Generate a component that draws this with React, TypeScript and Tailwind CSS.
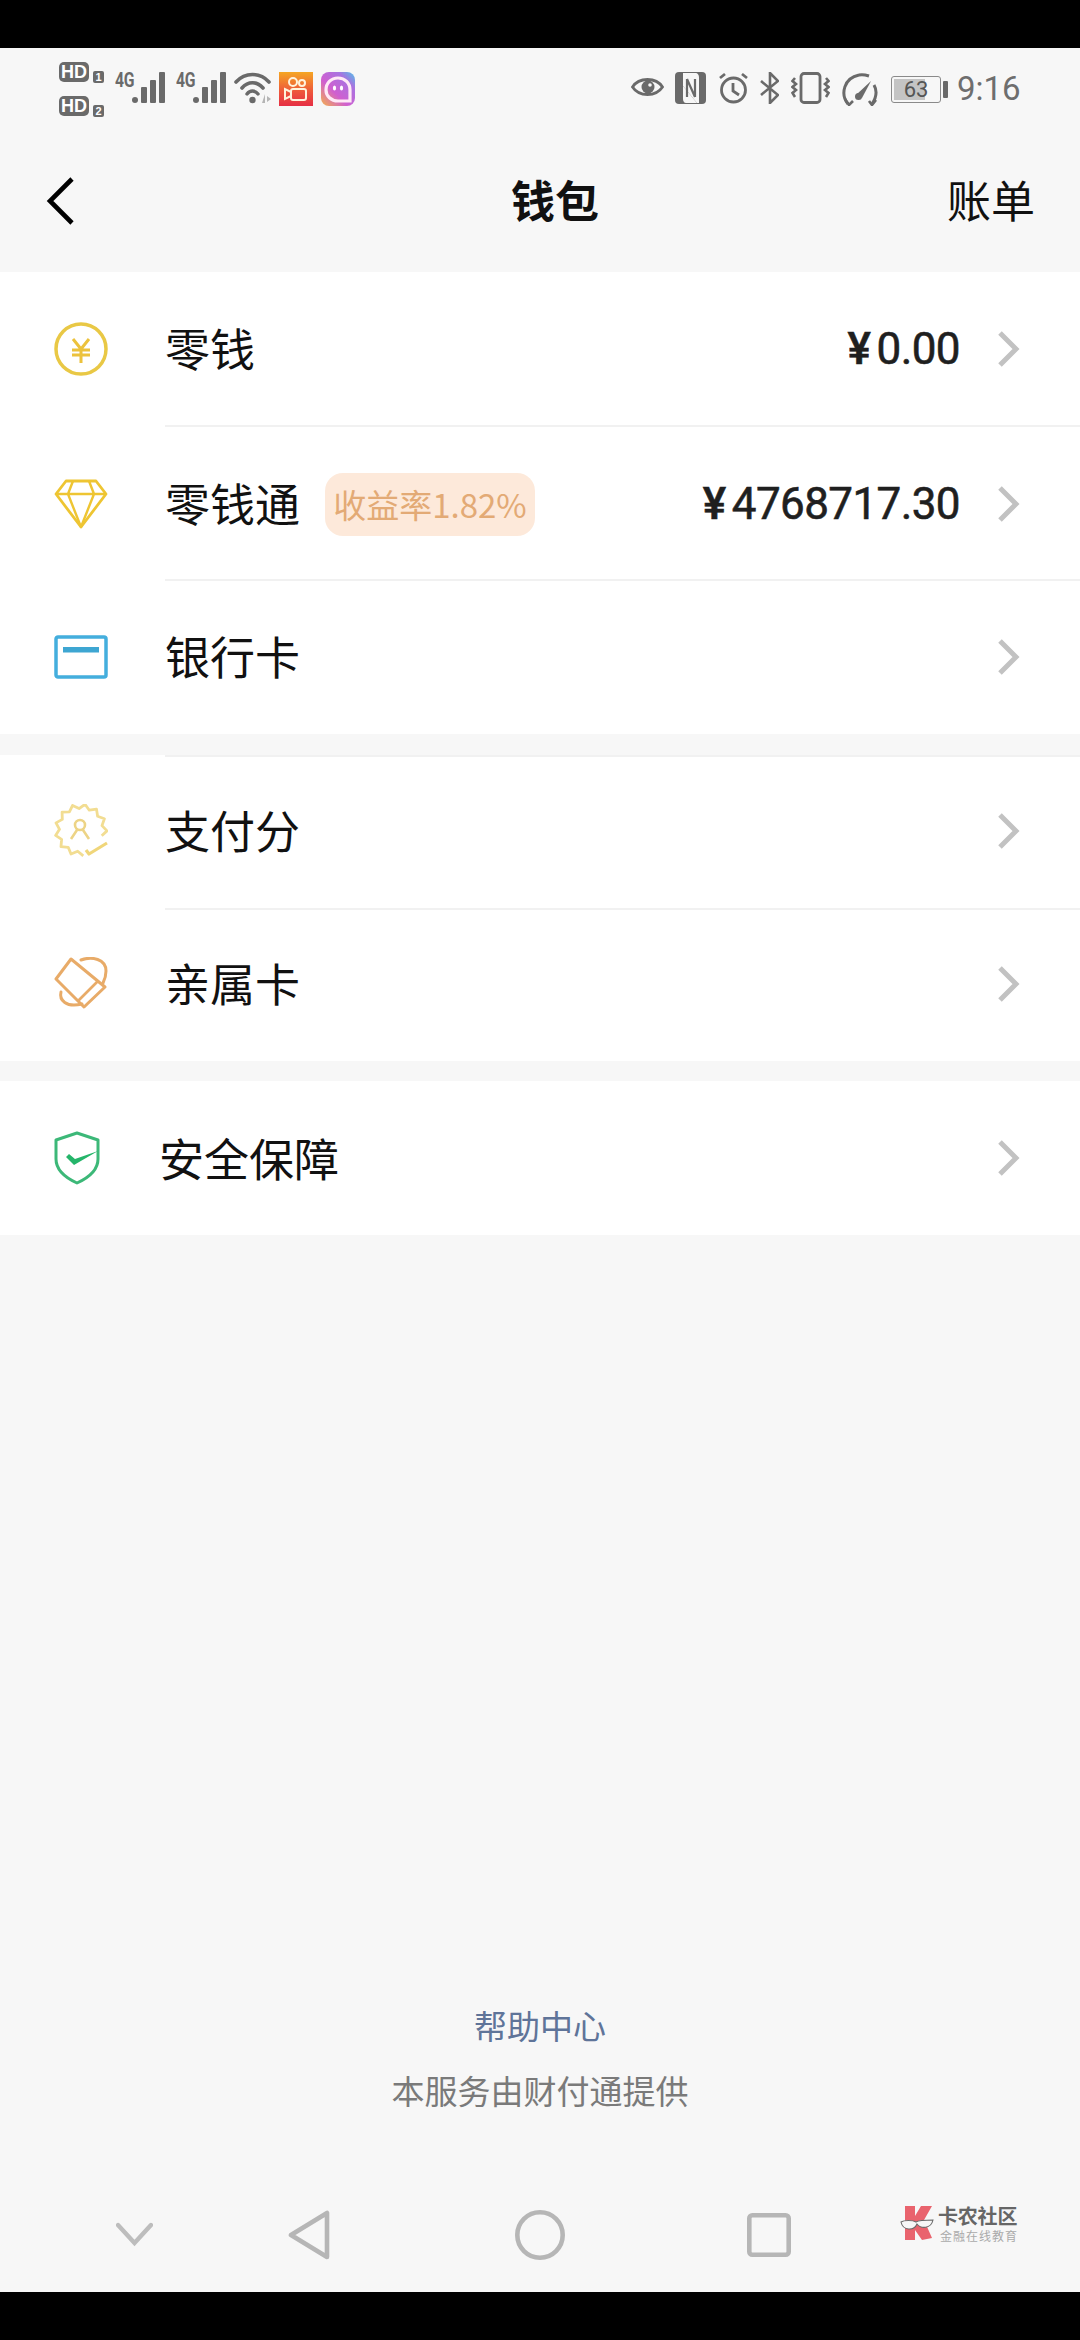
import React from "react";

const CJK = "font-['Noto_Sans_CJK_SC','Noto_Sans',sans-serif]";

function Chevron() {
  return (
    <svg width="24" height="38" viewBox="0 0 24 38" fill="none" className="shrink-0">
      <path d="M4 3 L20 19 L4 35" stroke="#c2c2c2" strokeWidth="5" />
    </svg>
  );
}

function CoinIcon() {
  return (
    <svg width="54" height="54" viewBox="0 0 54 54" fill="none">
      <circle cx="27" cy="27" r="25" stroke="#e9c845" strokeWidth="3.5" />
      <path d="M19 17 L27 27 L35 17 M18 28 H36 M18 33 H36 M27 27 V41" stroke="#ecc23c" strokeWidth="3" />
    </svg>
  );
}

function DiamondIcon() {
  return (
    <svg width="54" height="50" viewBox="0 0 54 50" fill="none">
      <path d="M12 2 H42 L52 15 L27 48 L2 15 Z" stroke="#eec532" strokeWidth="2.8" strokeLinejoin="round" />
      <path d="M2 15 H52 M19 2 L14 15 L27 48 L40 15 L35 2" stroke="#eec532" strokeWidth="2.4" strokeLinejoin="round" />
    </svg>
  );
}

function CardIcon() {
  return (
    <svg width="54" height="44" viewBox="0 0 54 44" fill="none">
      <rect x="2" y="2" width="50" height="40" rx="2" stroke="#44aedd" strokeWidth="3.5" />
      <rect x="9" y="12" width="36" height="5.5" fill="#3ea6d2" />
    </svg>
  );
}

const scallop = (() => {
  const pts: string[] = [];
  const n = 26;
  for (let i = 0; i <= n - 5; i++) {
    const a = ((i / n) * 360 + 85) * (Math.PI / 180);
    const r = i % 2 === 0 ? 26 : 21.5;
    pts.push(`${(27 + r * Math.cos(a)).toFixed(1)} ${(26 + r * Math.sin(a)).toFixed(1)}`);
  }
  return "M" + pts.join(" L");
})();

function ScoreIcon() {
  return (
    <svg width="54" height="54" viewBox="0 0 54 54" fill="none">
      <path d={scallop} stroke="#f2dd92" strokeWidth="2.8" strokeLinejoin="round" />
      <path d="M32 46 L35 50 L53 39" stroke="#f0d67a" strokeWidth="3.2" strokeLinejoin="round" />
      <circle cx="26" cy="21" r="5" stroke="#edd486" strokeWidth="2.6" />
      <path d="M23 26 L17 35 M29 26 L35 35" stroke="#edd486" strokeWidth="2.6" />
    </svg>
  );
}

function FamilyCardIcon() {
  return (
    <svg width="54" height="54" viewBox="0 0 54 54" fill="none">
      <path d="M17 2 L2 22 L30 50 L51 30 Z" stroke="#e8ab68" strokeWidth="3" strokeLinejoin="round" />
      <path d="M24 44 L44 24" stroke="#e8ab68" strokeWidth="2.6" />
      <path d="M27 3 C38 -1 52 2 52 14 C52 18 51 22 49 26" stroke="#e8ab68" strokeWidth="3" strokeLinecap="round" />
      <path d="M7 35 C5 43 12 51 28 47" stroke="#e8ab68" strokeWidth="3" strokeLinecap="round" />
    </svg>
  );
}

function ShieldIcon() {
  return (
    <svg width="46" height="54" viewBox="0 0 46 54" fill="none">
      <path d="M23 2 L44 9 V28 C44 40 34 47 23 52 C12 47 2 40 2 28 V9 Z" stroke="#3cb878" strokeWidth="3" strokeLinejoin="round" />
      <path d="M12 26 L20 34 L44 20 L21 28 L15 23 Z" fill="#25b56a" />
    </svg>
  );
}

type RowProps = {
  icon: React.ReactNode;
  label: string;
  labelClass?: string;
  yen?: string;
  value?: string;
  badge?: string;
  h: string;
};

function Row({ icon, label, labelClass = "ml-[11px] -mt-[3px]", yen, value, badge, h }: RowProps) {
  return (
    <div className={`flex items-center pl-[54px] pr-[60px] ${h}`}>
      <div className="w-[100px] flex items-center shrink-0">{icon}</div>
      <span className={`text-[45px] leading-none text-[#111] ${labelClass}`}>{label}</span>
      {badge && (
        <span className="ml-[25px] flex items-center justify-center w-[210px] h-[63px] rounded-[18px] bg-[#fde9da] text-[33px] leading-none text-[#e3aa75]">
          {badge}
        </span>
      )}
      {value && (
        <span className="ml-auto flex items-center font-['Roboto',sans-serif] text-[44px] leading-none text-[#1f1f1f] [-webkit-text-stroke:0.6px_#1f1f1f]">
          <span className="font-medium w-[29px]">{yen}</span>
          <span className="tracking-[-0.6px]">{value}</span>
        </span>
      )}
      <div className={value ? "ml-[36px]" : "ml-auto"}>
        <Chevron />
      </div>
    </div>
  );
}

function Divider() {
  return <div className="ml-[165px] h-[2px] bg-[#f1f1f1]" />;
}

function HdBadge({ n }: { n: string }) {
  return (
    <div className="flex items-end gap-[4px]">
      <span className="flex items-center justify-center w-[30px] h-[20px] rounded-[5px] bg-[#6a6a6a] font-['Liberation_Sans',sans-serif] text-[18px] font-bold leading-none text-white">
        HD
      </span>
      <span className="flex items-center justify-center w-[11px] h-[12px] rounded-[2px] bg-[#6a6a6a] font-['Liberation_Sans',sans-serif] text-[11px] font-bold leading-none text-white -mb-[1px]">
        {n}
      </span>
    </div>
  );
}

function Signal() {
  return (
    <div className="flex items-start">
      <span className="font-['Roboto',sans-serif] text-[21px] font-bold leading-[16px] text-[#6a6a6a] w-[17px] tracking-[-0.5px] scale-x-75 origin-left">
        4G
      </span>
      <svg width="33" height="32" viewBox="0 0 33 32" className="shrink-0">
        <circle cx="3" cy="28" r="3" fill="#6a6a6a" />
        <rect x="9" y="15" width="6" height="16" rx="1" fill="#6a6a6a" />
        <rect x="18" y="8" width="6" height="23" rx="1" fill="#6a6a6a" />
        <rect x="27" y="0" width="6" height="31" rx="1" fill="#6a6a6a" />
      </svg>
    </div>
  );
}

function StatusBar() {
  return (
    <div className="relative flex items-start h-[84px] pl-[59px] pr-[57px] pt-[14px]">
      <div className="flex flex-col gap-[14px]">
        <HdBadge n="1" />
        <HdBadge n="2" />
      </div>
      <div className="flex items-start ml-[11px] mt-[10px]">
        <Signal />
        <div className="ml-[11px]">
          <Signal />
        </div>
        <svg width="37" height="32" viewBox="0 0 37 32" fill="none" className="ml-[8px]">
          <path d="M2 10 C11 0 26 0 35 10" stroke="#6a6a6a" strokeWidth="3.6" strokeLinecap="round" />
          <path d="M8 16 C14 9 23 9 29 16" stroke="#6a6a6a" strokeWidth="3.6" strokeLinecap="round" />
          <path d="M13 22 C16 18 21 18 24 22" stroke="#6a6a6a" strokeWidth="3.4" strokeLinecap="round" />
          <circle cx="18.5" cy="28" r="3.2" fill="#6a6a6a" />
          <path d="M28 31 L31 22 L31 31 M33 24 L37 27 L33 30 Z" fill="#b5b5b5" />
        </svg>
        <svg width="34" height="34" viewBox="0 0 34 34" fill="none" className="ml-[8px]">
          <defs>
            <linearGradient id="ks" x1="0" y1="0" x2="0" y2="1">
              <stop offset="0" stopColor="#f5a623" />
              <stop offset="0.55" stopColor="#ee5a3a" />
              <stop offset="1" stopColor="#e62f45" />
            </linearGradient>
          </defs>
          <rect width="34" height="34" fill="url(#ks)" />
          <circle cx="14" cy="10" r="4" stroke="#fff3dc" strokeWidth="2" />
          <circle cx="23" cy="11" r="3" stroke="#fff3dc" strokeWidth="2" />
          <rect x="12" y="17" width="15" height="11" rx="2" stroke="#fff3dc" strokeWidth="2" />
          <path d="M12 20 L6 17 V27 L12 24" stroke="#fff3dc" strokeWidth="2" />
        </svg>
        <svg width="34" height="34" viewBox="0 0 34 34" fill="none" className="ml-[8px]">
          <defs>
            <linearGradient id="bb" x1="0" y1="1" x2="1" y2="0">
              <stop offset="0" stopColor="#f5b04a" />
              <stop offset="0.4" stopColor="#d05fd0" />
              <stop offset="0.75" stopColor="#a972e0" />
              <stop offset="1" stopColor="#4fc3e8" />
            </linearGradient>
          </defs>
          <rect width="34" height="34" rx="8" fill="url(#bb)" />
          <path d="M17 6 C24 6 29 11 29 18 V29 H17 C10 29 5 24 5 18 C5 11 10 6 17 6 Z" stroke="#ffe9f6" strokeWidth="3.2" />
          <ellipse cx="13.5" cy="16" rx="1.6" ry="2.6" fill="#fff" />
          <ellipse cx="20.5" cy="16" rx="1.6" ry="2.6" fill="#fff" />
        </svg>
      </div>

      <div className="ml-auto flex items-start mt-[10px]">
        <svg width="33" height="26" viewBox="0 0 33 26" fill="none" className="mt-[2px]">
          <path d="M1.5 13 C8 3 25 3 31.5 13 C25 23 8 23 1.5 13 Z" stroke="#6a6a6a" strokeWidth="2.8" />
          <circle cx="17" cy="13" r="6.5" fill="#6a6a6a" />
          <circle cx="19" cy="11" r="1.8" fill="#f7f7f7" />
        </svg>
        <svg width="31" height="32" viewBox="0 0 31 32" className="ml-[11px]">
          <rect width="31" height="32" rx="4" fill="#6a6a6a" />
          <path d="M8 1 H20 C23 1 24 3 24 6 V31 H22 L8 14 Z" fill="#f7f7f7" />
          <path d="M8 14 L22 31 H11 C9 31 8 29 8 27 Z" fill="#f7f7f7" />
          <path d="M12 7 V25 M12 7 L20 25 M20 7 V25" stroke="#6a6a6a" strokeWidth="2.2" fill="none" />
        </svg>
        <svg width="31" height="32" viewBox="0 0 31 32" fill="none" className="ml-[12px]">
          <circle cx="15.5" cy="18" r="12" stroke="#6a6a6a" strokeWidth="2.8" />
          <path d="M15 11 V19 L21 23" stroke="#6a6a6a" strokeWidth="2.8" />
          <path d="M2 6 L7 2 M29 6 L24 2" stroke="#6a6a6a" strokeWidth="2.8" />
        </svg>
        <svg width="19" height="32" viewBox="0 0 19 32" fill="none" className="ml-[11px]">
          <path d="M1 9 L18 23 L10 31 V1 L18 9 L1 23" stroke="#6a6a6a" strokeWidth="2.6" />
        </svg>
        <svg width="39" height="32" viewBox="0 0 39 32" fill="none" className="ml-[12px]">
          <rect x="10" y="1.5" width="19" height="29" rx="3" stroke="#6a6a6a" strokeWidth="2.8" />
          <path d="M4 6 L1.5 9 L5 12 L1.5 15 L5 18 L1.5 21 L4 25" stroke="#6a6a6a" strokeWidth="2.6" />
          <path d="M35 6 L37.5 9 L34 12 L37.5 15 L34 18 L37.5 21 L35 25" stroke="#6a6a6a" strokeWidth="2.6" />
        </svg>
        <svg width="37" height="34" viewBox="0 0 37 34" fill="none" className="ml-[11px]">
          <path d="M7 32 C-1 22 3 6 18 3 C22 2 25 3 28 4" stroke="#6a6a6a" strokeWidth="3" />
          <path d="M33 13 C37 20 35 26 31 32" stroke="#6a6a6a" strokeWidth="3" />
          <path d="M4 27 L8 33 L12 29 M28 29 L31 33 L35 28" stroke="#6a6a6a" strokeWidth="2.6" />
          <path d="M15 23 L30 9 L21 26 Z" fill="#6a6a6a" />
          <circle cx="17.5" cy="24.5" r="3.5" fill="#6a6a6a" />
        </svg>
        <div className="relative ml-[13px] mt-[4px] w-[50px] h-[27px] rounded-[3px] border-[1.5px] border-[#8a8a8a] overflow-hidden flex items-center justify-center">
          <div className="absolute left-[2px] top-[2px] bottom-[2px] w-[31px] bg-[#c4c4c4]" />
          <span className="relative font-['Roboto',sans-serif] text-[22px] leading-none text-[#555]">63</span>
        </div>
        <div className="ml-[2px] mt-[9px] w-[5px] h-[17px] rounded-[1px] bg-[#6a6a6a]" />
        <span className="ml-[9px] font-['Roboto',sans-serif] text-[33px] leading-[32px] mt-[1px] text-[#6e6e6e] w-[66px]">9:16</span>
      </div>
    </div>
  );
}

export default function App() {
  return (
    <div className={`relative w-[1080px] h-[2340px] flex flex-col bg-[#f7f7f7] overflow-hidden ${CJK}`}>
      <div className="h-[48px] bg-black shrink-0" />
      <StatusBar />
      <header className="relative flex items-center h-[140px] pl-[46px] pr-[45px] pb-[3px]">
        <svg width="30" height="50" viewBox="0 0 30 50" fill="none">
          <path d="M26 3 L4 25 L26 47" stroke="#000" strokeWidth="4.6" />
        </svg>
        <span className="ml-[435px] text-[44px] leading-none font-bold text-[#111] -mt-[4px]">钱包</span>
        <span className="ml-auto text-[44px] leading-none text-[#111] -mt-[4px]">账单</span>
      </header>

      <section className="bg-white">
        <Row h="h-[153px]" icon={<CoinIcon />} label="零钱" yen="¥" value="0.00" />
        <Divider />
        <Row h="h-[152px] pt-[2px]" icon={<DiamondIcon />} label="零钱通" badge="收益率1.82%" yen="¥" value="4768717.30" />
        <Divider />
        <Row h="h-[153px] pb-[2px]" icon={<CardIcon />} label="银行卡" />
      </section>

      <section className="bg-white mt-[21px]">
        <Divider />
        <Row h="h-[151px] pb-[3px]" icon={<ScoreIcon />} label="支付分" />
        <Divider />
        <Row h="h-[151px] pb-[3px]" icon={<FamilyCardIcon />} label="亲属卡" />
      </section>

      <section className="bg-white mt-[20px]">
        <Row h="h-[154px]" icon={<ShieldIcon />} label="安全保障" labelClass="ml-[5px] -mt-[2px]" />
      </section>

      <footer className="mt-auto flex flex-col items-center">
        <span className="text-[33px] leading-[48px] text-[#5f7499]">帮助中心</span>
        <span className="mt-[17px] text-[33px] leading-[48px] text-[#7a7a7a]">本服务由财付通提供</span>
        <nav className="relative w-full h-[178px] pt-[96px] pl-[116px] flex items-start">
          <svg width="37" height="50" viewBox="0 0 37 50" fill="none">
            <path d="M2 15 L18.5 33 L35 15" stroke="#bdbdbd" strokeWidth="4.4" strokeLinecap="round" />
          </svg>
          <svg width="42" height="50" viewBox="0 0 42 50" fill="none" className="ml-[135px]">
            <path d="M3 25 L39 3 V47 Z" stroke="#b6b6b6" strokeWidth="4.6" strokeLinejoin="round" />
          </svg>
          <svg width="50" height="50" viewBox="0 0 50 50" fill="none" className="ml-[185px]">
            <circle cx="25" cy="25" r="22.7" stroke="#b6b6b6" strokeWidth="4.6" />
          </svg>
          <svg width="44" height="50" viewBox="0 0 44 50" fill="none" className="ml-[182px]">
            <rect x="2.3" y="5.3" width="39.4" height="39.4" rx="3" stroke="#b6b6b6" strokeWidth="4.6" />
          </svg>
          <div className="absolute left-[900px] top-[91px] flex items-start">
            <svg width="34" height="36" viewBox="0 0 34 36" fill="none">
              <path d="M5 1 H15 V11 L21 1 H32 L24 15 L32 33 L22 35 L15 25 V35 H5 Z" fill="#e9636d" />
              <path d="M1 17 C4 15 13 15 16 17 C19 15 29 15 33 15 C31 24 21 24 17 19 C14 26 3 26 1 17 Z" fill="#f7f7f7" stroke="#6b6b6b" strokeWidth="1.1" />
            </svg>
            <div className="ml-[4px] flex flex-col">
              <span className="text-[20px] leading-[22px] font-bold text-[#666] tracking-[-0.2px]">卡农社区</span>
              <span className="text-[12px] leading-[14px] text-[#aaa] tracking-[1px] mt-[2px] pl-[2px]">金融在线教育</span>
            </div>
          </div>
        </nav>
      </footer>
      <div className="h-[48px] bg-black shrink-0" />
    </div>
  );
}
